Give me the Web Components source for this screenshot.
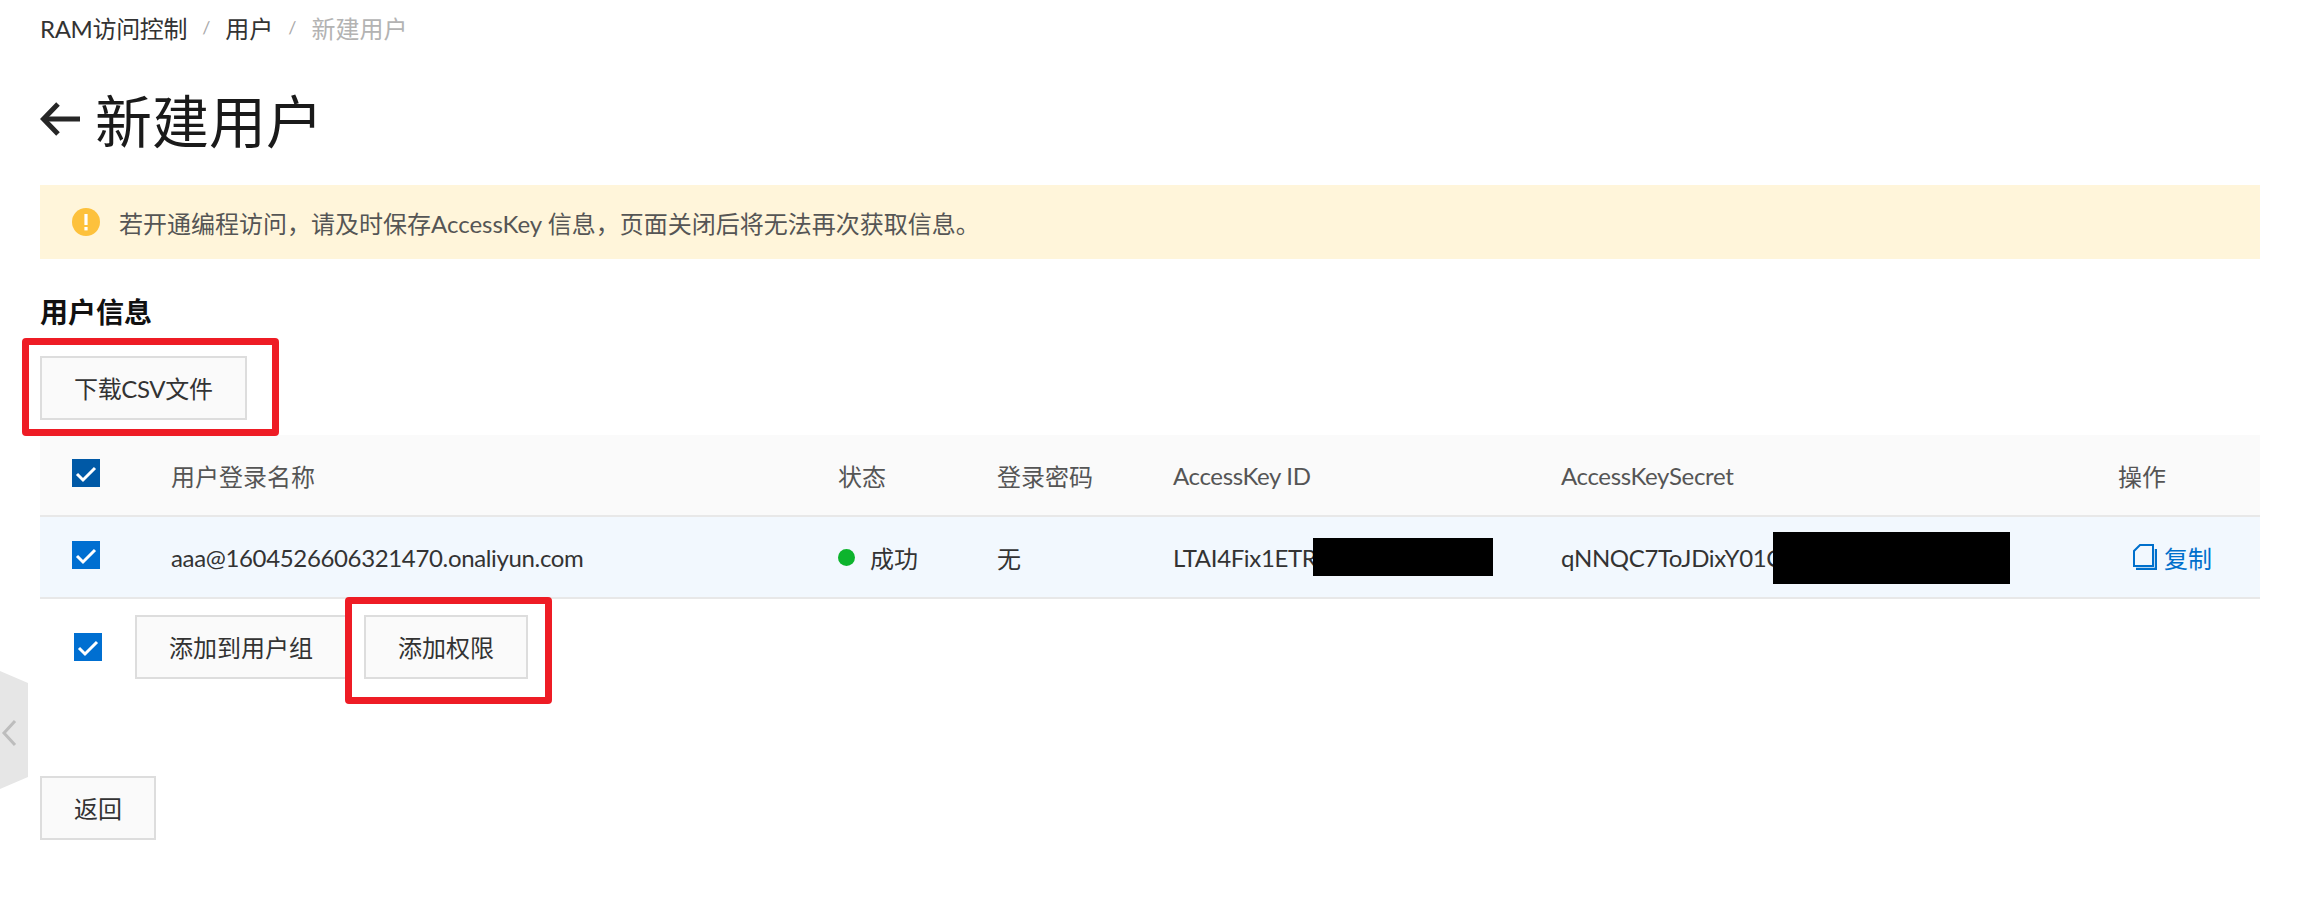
<!DOCTYPE html>
<html lang="zh">
<head>
<meta charset="utf-8">
<title>新建用户</title>
<style>
html, body { margin: 0; background: #fff; }
body {
  font-family: Lato, "Noto Sans CJK SC", sans-serif;
  font-size: 24px;
  color: #333;
  height: 923px;
  overflow: hidden;
}
</style>
</head>
<body>
<ram-page>
  <ram-breadcrumb></ram-breadcrumb>
  <ram-title>新建用户</ram-title>
  <ram-alert>若开通编程访问，请及时保存AccessKey 信息，页面关闭后将无法再次获取信息。</ram-alert>
  <ram-section>用户信息</ram-section>
  <ram-toolbar><ram-button marked style="letter-spacing:-.35px;--mark-right:-32px;--mark-bottom:-16px">下载CSV文件</ram-button></ram-toolbar>
  <user-table></user-table>
  <ram-footer>
    <ram-checkbox></ram-checkbox>
    <ram-button>添加到用户组</ram-button>
    <ram-button marked style="--mark-left:-19px;--mark-right:-24px;--mark-bottom:-25px">添加权限</ram-button>
  </ram-footer>
  <ram-back><ram-button>返回</ram-button></ram-back>
</ram-page>
<side-handle></side-handle>

<script>
/**
 * Small helper so every element below gets an open shadow root from a string.
 */
class ShadowElement extends HTMLElement {
  constructor(html) {
    super();
    this.attachShadow({mode: 'open'});
    this.shadowRoot.innerHTML = html;
  }
}

class RamPage extends ShadowElement {
  constructor() {
    super(`<style>
      :host { display: block; padding: 0 48px 0 40px; }
    </style><slot></slot>`);
  }
}

class RamBreadcrumb extends ShadowElement {
  constructor() {
    super(`<style>
      :host { display: flex; align-items: center; height: 54px; color: #333; }
      .root { letter-spacing: -.35px; }
      .sep { color: #aaa; font-size: 18px; margin: 0 15px; }
      .current { color: #b3b3b3; }
    </style>
    <span class="root">RAM访问控制</span><span class="sep">/</span><span>用户</span><span class="sep">/</span><span class="current">新建用户</span>`);
  }
}

class RamTitle extends ShadowElement {
  constructor() {
    super(`<style>
      :host { display: flex; align-items: center; height: 66px; margin-top: 31px; color: #1a1a1a; font-size: 57px; }
      svg { width: 40px; height: 34px; margin-right: 15px; flex: none; position: relative; top: 1px; }
    </style>
    <svg viewBox="0 0 40 34" fill="none" stroke="#262626" stroke-width="5">
      <path d="M40 17H4"/><path d="M18 2 3.500 17l14.500 15"/>
    </svg><slot></slot>`);
  }
}

class RamAlert extends ShadowElement {
  constructor() {
    super(`<style>
      :host { display: flex; align-items: center; height: 74px; margin-top: 34px; padding-left: 32px; background: #fff5da; color: #555; }
      svg { width: 28px; height: 28px; margin-right: 19px; flex: none; }
    </style>
    <svg viewBox="0 0 28 28">
      <circle cx="14" cy="14" r="14" fill="#fdc13c"/>
      <rect x="12.400" y="6" width="3.200" height="11" fill="#fff"/>
      <rect x="12.400" y="19" width="3.200" height="3.400" fill="#fff"/>
    </svg><slot></slot>`);
  }
}

class RamSection extends ShadowElement {
  constructor() {
    super(`<style>
      :host { display: block; margin-top: 35px; height: 36px; line-height: 36px; font-size: 28px; font-weight: 700; color: #111; }
    </style><slot></slot>`);
  }
}

class RamToolbar extends ShadowElement {
  constructor() {
    super(`<style>
      :host { display: flex; margin-top: 26px; height: 79px; align-items: flex-start; }
    </style><slot></slot>`);
  }
}

class RamButton extends ShadowElement {
  constructor() {
    super(`<style>
      :host { display: inline-flex; position: relative; flex: none; }
      .btn {
        box-sizing: border-box; height: 64px; padding: 0 32px 2px;
        display: flex; align-items: center;
        background: #fafafa; border: 2px solid #ddd; color: #333;
      }
      .mark {
        display: none; position: absolute; box-sizing: border-box;
        left: var(--mark-left, -18px); top: -18px;
        right: var(--mark-right, -22px); bottom: var(--mark-bottom, -17px);
        border: 7px solid #ee1c25; border-radius: 4px; pointer-events: none;
      }
      :host([marked]) .mark { display: block; }
    </style><div class="btn"><slot></slot></div><div class="mark"></div>`);
  }
}

class RamCheckbox extends ShadowElement {
  constructor() {
    super(`<style>
      :host { display: inline-block; width: 28px; height: 28px; flex: none; background: var(--check-bg, #006fd1); }
      svg { display: block; width: 100%; height: 100%; }
    </style>
    <svg viewBox="0 0 28 28" fill="none" stroke="#fff" stroke-width="3"><path d="M5 15l6 6L23 9"/></svg>`);
  }
}

class UserTable extends ShadowElement {
  constructor() {
    super(`<style>
      :host { display: block; color: #555; }
      .row {
        display: grid; align-items: center;
        grid-template-columns: 131px 667px 159px 176px 388px 557px 1fr;
        box-sizing: border-box; height: 82px;
      }
      .head { background: #fafafa; border-bottom: 2px solid #e8e8e8; }
      .body { background: #f2f8fe; border-bottom: 2px solid #e8e8e8; color: #333; }
      .check { padding-left: 32px; }
      .head ram-checkbox { --check-bg: #0059a6; }
      .latin { letter-spacing: -.35px; }
      .status { display: flex; align-items: center; }
      .dot { width: 17px; height: 17px; border-radius: 50%; background: #0db42d; margin-right: 15px; }
      .secret { position: relative; white-space: nowrap; }
      .hide { position: absolute; background: #000; }
      .hide.a { left: 140px; width: 180px; top: -5px; height: 38px; }
      .hide.b { left: 212px; width: 237px; top: -11px; height: 52px; }
      .copy { display: flex; align-items: center; color: #0070cc; padding-left: 15px; }
      .copy svg { width: 24px; height: 26px; margin-right: 7px; }
    </style>
    <div class="row head">
      <div class="check"><ram-checkbox></ram-checkbox></div>
      <div>用户登录名称</div><div>状态</div><div>登录密码</div>
      <div class="latin">AccessKey ID</div><div class="latin">AccessKeySecret</div><div>操作</div>
    </div>
    <div class="row body">
      <div class="check"><ram-checkbox></ram-checkbox></div>
      <div class="latin">aaa@1604526606321470.onaliyun.com</div>
      <div class="status"><span class="dot"></span>成功</div>
      <div>无</div>
      <div class="secret latin">LTAI4Fix1ETRI<span class="hide a"></span></div>
      <div class="secret latin">qNNQC7ToJDixY01C<span class="hide b"></span></div>
      <div class="copy">
        <svg viewBox="0 0 24 26" fill="none" stroke="#0070cc" stroke-width="2">
          <path d="M7 1h13v21H1V7z"/><path d="M3 25h20V5" stroke-width="2.400"/>
        </svg>复制
      </div>
    </div>`);
  }
}

class RamFooter extends ShadowElement {
  constructor() {
    super(`<style>
      :host { display: flex; align-items: center; margin-top: 16px; padding-left: 34px; }
      ::slotted(ram-checkbox) { margin-right: 33px; }
      ::slotted(ram-button) { margin-right: 17px; }
    </style><slot></slot>`);
  }
}

class RamBack extends ShadowElement {
  constructor() {
    super(`<style>
      :host { display: flex; margin-top: 97px; }
    </style><slot></slot>`);
  }
}

class SideHandle extends ShadowElement {
  constructor() {
    super(`<style>
      :host { position: absolute; left: 0; top: 671px; width: 28px; height: 118px; }
      svg { display: block; }
    </style>
    <svg width="28" height="118" viewBox="0 0 28 118">
      <path d="M0 0l28 12v94L0 118z" fill="#e6e6e6"/>
      <path d="M15 50 4 62l11 12" fill="none" stroke="#bdbdbd" stroke-width="3"/>
    </svg>`);
  }
}

window.customElements.define('ram-page', RamPage);
window.customElements.define('ram-breadcrumb', RamBreadcrumb);
window.customElements.define('ram-title', RamTitle);
window.customElements.define('ram-alert', RamAlert);
window.customElements.define('ram-section', RamSection);
window.customElements.define('ram-toolbar', RamToolbar);
window.customElements.define('ram-button', RamButton);
window.customElements.define('ram-checkbox', RamCheckbox);
window.customElements.define('user-table', UserTable);
window.customElements.define('ram-footer', RamFooter);
window.customElements.define('ram-back', RamBack);
window.customElements.define('side-handle', SideHandle);
</script>
</body>
</html>
